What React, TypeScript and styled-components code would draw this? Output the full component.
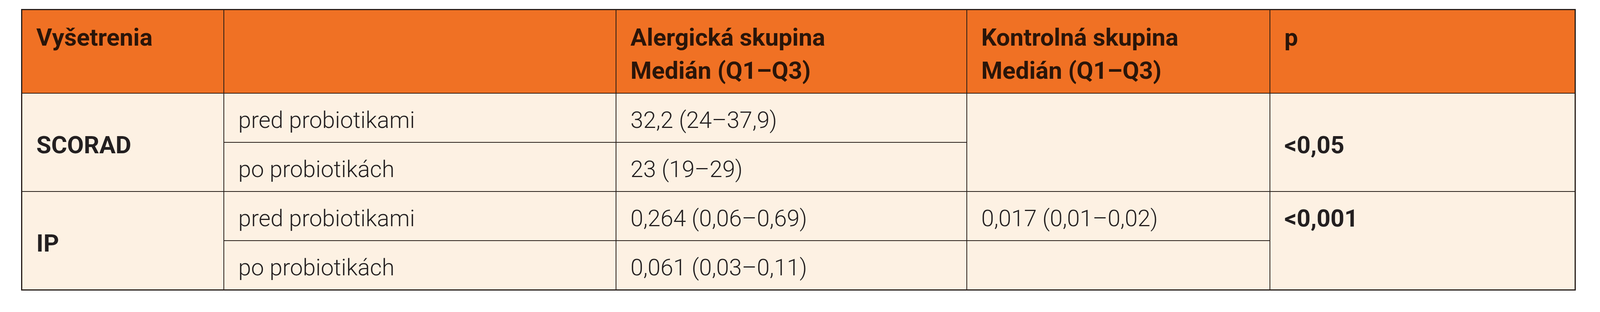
import React from "react";
import styled, { createGlobalStyle } from "styled-components";

const GlobalStyle = createGlobalStyle`
  html, body {
    margin: 0;
    padding: 0;
    background: #ffffff;
  }
  body {
    font-family: Roboto, "Liberation Sans", Arial, sans-serif;
  }
`;

const Page = styled.div`
  padding: 23px 0 0 54px;
`;

const Grid = styled.div`
  display: grid;
  width: 3980px;
  box-sizing: border-box;
  grid-template-columns: 515px 1002px 896px 774px 779px;
  grid-template-rows: 212px 124px 124px 124px 124px;
  gap: 2px;
  padding: 3px;
  background: #251c17;
`;

const HeadCell = styled.div`
  background: #f07124;
  color: #2a1509;
  font-family: Roboto, "Liberation Sans", Arial, sans-serif;
  font-weight: 700;
  font-size: 62px;
  line-height: 85px;
  padding: 27px 36px 0 36px;
  border-bottom: 1px solid #3d1705;
  margin-bottom: -1px;
  white-space: nowrap;
`;

const BodyCell = styled.div<{ $rows?: number; $valign?: "center" | "top"; $bold?: boolean }>`
  background: #fdf1e3;
  color: #231f20;
  grid-row: span ${(p) => p.$rows ?? 1};
  display: flex;
  align-items: ${(p) => (p.$valign === "top" ? "flex-start" : "center")};
  box-sizing: border-box;
  padding: ${(p) => (p.$valign === "top" ? "31px" : p.$bold ? "12px" : "10px")} 36px 0 36px;
  font-family: Roboto, "Liberation Sans", Arial, sans-serif;
  font-weight: ${(p) => (p.$bold ? 700 : 300)};
  font-size: ${(p) => (p.$bold ? "62px" : "59px")};
  line-height: normal;
  white-space: nowrap;
`;

type Row = {
  label: string;
  before: string;
  after: string;
  allergicBefore: string;
  allergicAfter: string;
  control?: string;
  p: string;
  pAlign: "center" | "top";
};

const rows: Row[] = [
  {
    label: "SCORAD",
    before: "pred probiotikami",
    after: "po probiotikách",
    allergicBefore: "32,2 (24–37,9)",
    allergicAfter: "23 (19–29)",
    p: "<0,05",
    pAlign: "center",
  },
  {
    label: "IP",
    before: "pred probiotikami",
    after: "po probiotikách",
    allergicBefore: "0,264 (0,06–0,69)",
    allergicAfter: "0,061 (0,03–0,11)",
    control: "0,017 (0,01–0,02)",
    p: "<0,001",
    pAlign: "top",
  },
];

export default function App() {
  return (
    <>
      <GlobalStyle />
      <Page>
        <Grid>
          <HeadCell>Vyšetrenia</HeadCell>
          <HeadCell />
          <HeadCell>
            Alergická skupina
            <br />
            Medián (Q1–Q3)
          </HeadCell>
          <HeadCell>
            Kontrolná skupina
            <br />
            Medián (Q1–Q3)
          </HeadCell>
          <HeadCell>p</HeadCell>

          {rows.map((r) => (
            <React.Fragment key={r.label}>
              <BodyCell $rows={2} $bold>
                {r.label}
              </BodyCell>
              <BodyCell>{r.before}</BodyCell>
              <BodyCell>{r.allergicBefore}</BodyCell>
              {r.control ? (
                <BodyCell>{r.control}</BodyCell>
              ) : (
                <BodyCell $rows={2} />
              )}
              <BodyCell $rows={2} $bold $valign={r.pAlign}>
                {r.p}
              </BodyCell>
              <BodyCell>{r.after}</BodyCell>
              <BodyCell>{r.allergicAfter}</BodyCell>
              {r.control ? <BodyCell /> : null}
            </React.Fragment>
          ))}
        </Grid>
      </Page>
    </>
  );
}
